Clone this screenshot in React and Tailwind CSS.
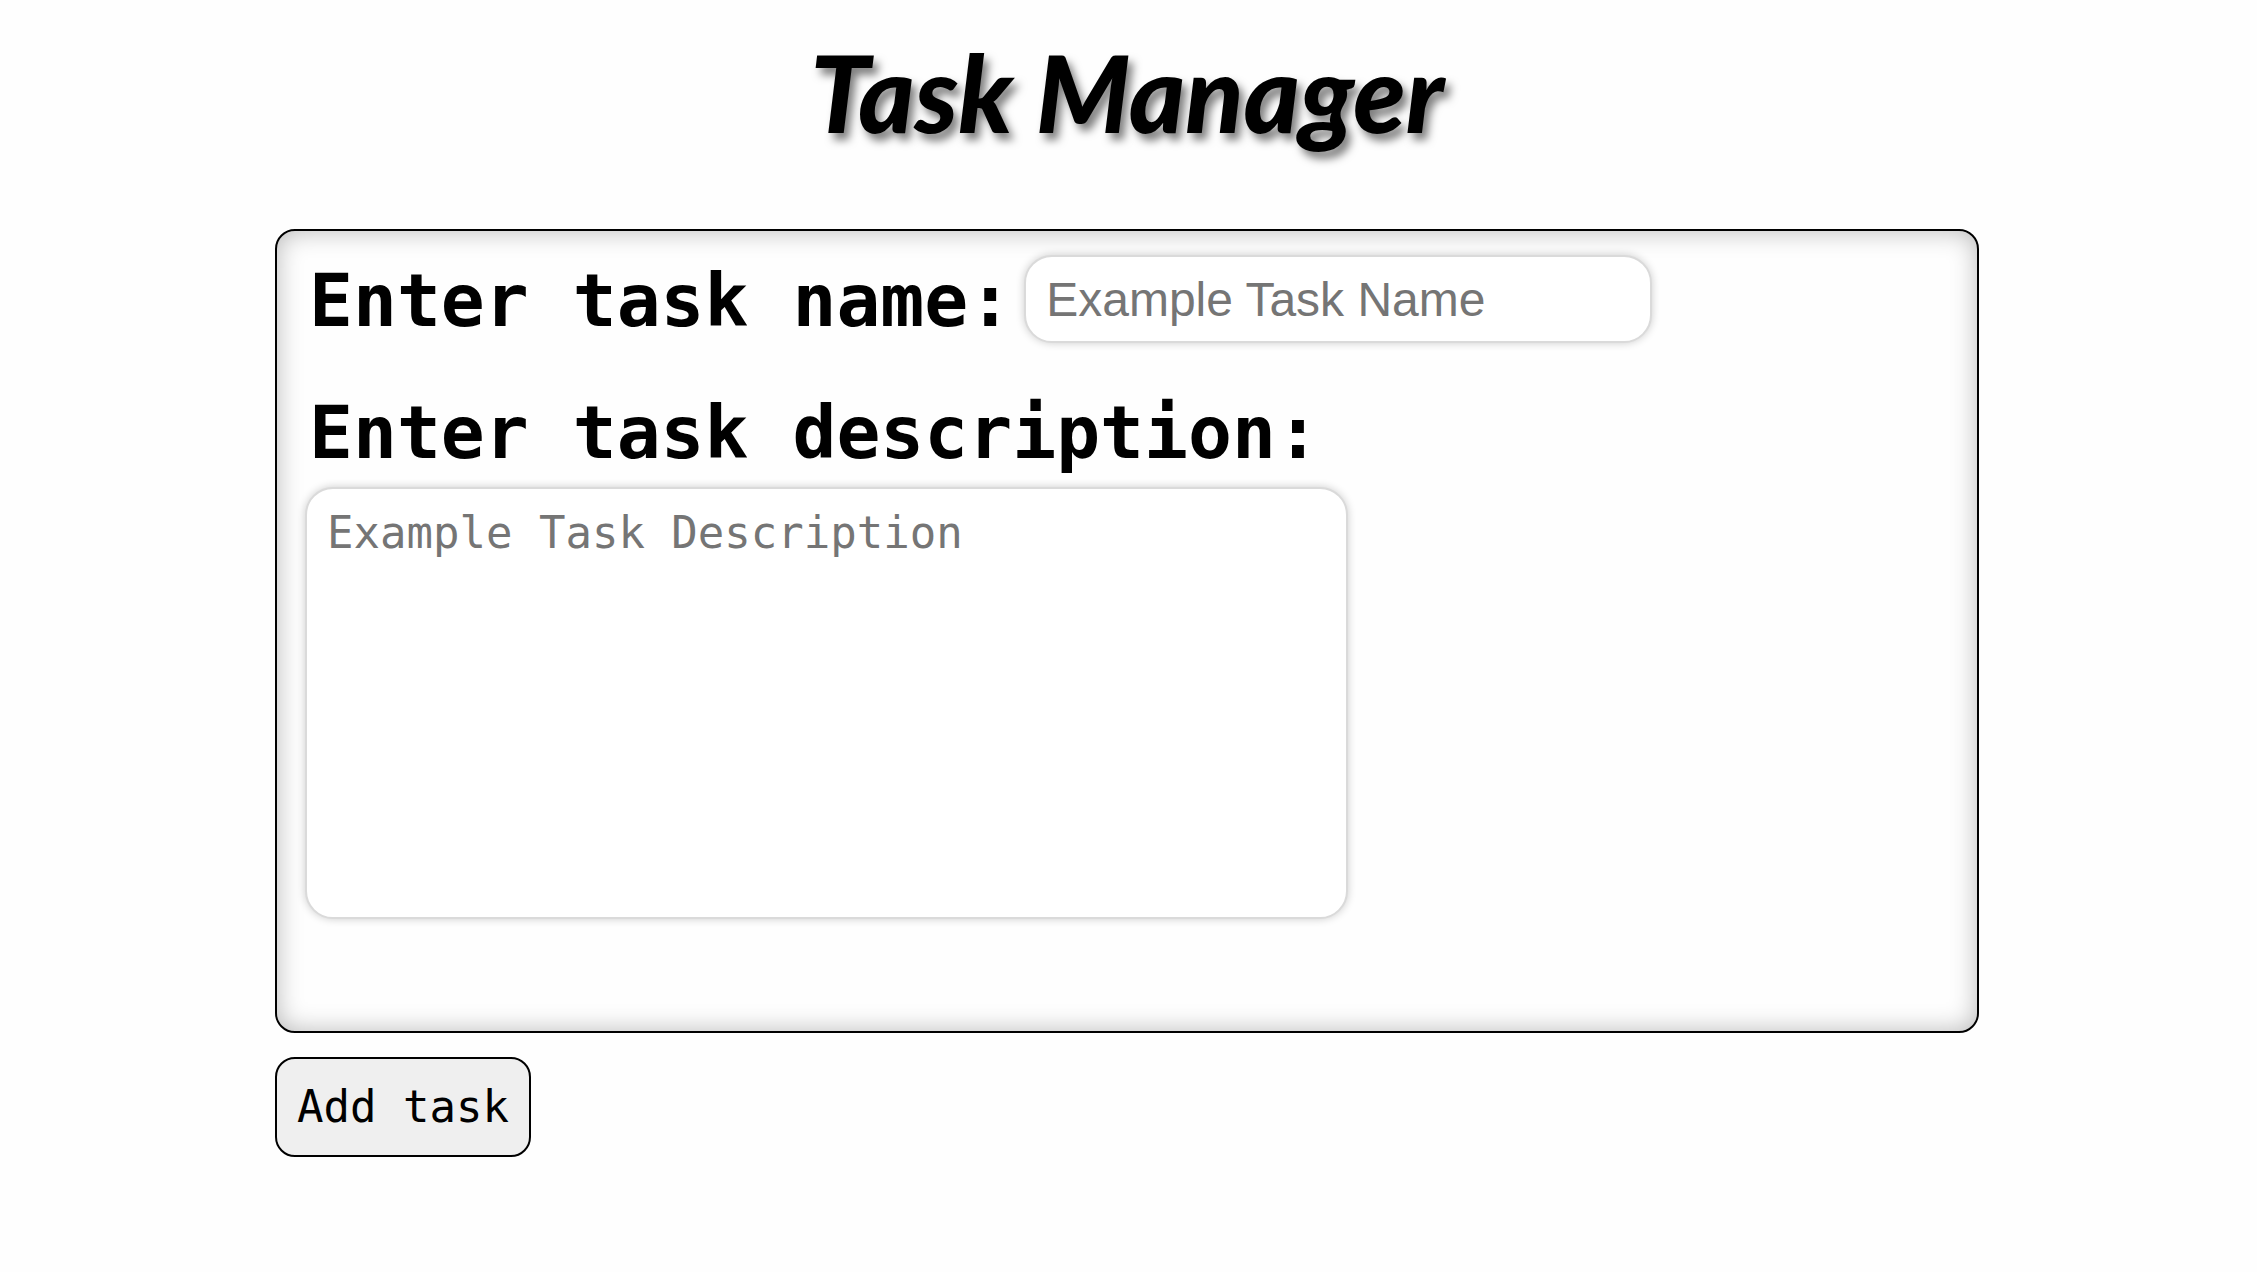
const fieldClass =
  'block max-w-full rounded-[28px] border-2 border-[#dadada] bg-white text-black placeholder:text-[#757575] placeholder:opacity-100 shadow-[0_0_8px_rgba(0,0,0,0.2)] outline-none';

const labelClass =
  "block pl-1 font-['DejaVu_Sans_Mono',monospace] text-[73px] leading-[92px] font-bold whitespace-nowrap";

export default function App() {
  return (
    <main className="min-h-screen bg-[#fefefe] pr-[278px] pl-[275px] text-black">
      <h1 className="pt-3 pb-[57px] text-center font-['Lato',cursive] text-[107px] leading-[160px] font-black italic [text-shadow:5px_7px_8px_rgba(0,0,0,0.5)]">
        Task Manager
      </h1>

      <form>
        <div className="rounded-[20px] border-2 border-black px-7 pt-6 pb-28 shadow-[inset_0_0_26px_rgba(0,0,0,0.28)]">
          <div className="flex flex-wrap items-start gap-x-3">
            <label htmlFor="task-name" className={labelClass}>
              Enter task name:
            </label>
            <input
              id="task-name"
              type="text"
              placeholder="Example Task Name"
              className={`${fieldClass} h-[88px] w-[628px] px-5 font-['Liberation_Sans',sans-serif] text-5xl`}
            />
          </div>

          <div className="pt-10">
            <label htmlFor="task-description" className={labelClass}>
              Enter task description:
            </label>
            <textarea
              id="task-description"
              placeholder="Example Task Description"
              className={`${fieldClass} mt-2 h-[432px] w-[1043px] resize-none px-5 py-4 font-['DejaVu_Sans_Mono',monospace] text-[44px] leading-[56px]`}
            />
          </div>
        </div>

        <button
          type="button"
          className="mt-6 block rounded-[20px] border-2 border-black bg-[#efefef] px-5 py-5 font-['DejaVu_Sans_Mono',monospace] text-[44px] leading-[56px]"
        >
          Add task
        </button>
      </form>
    </main>
  );
}
